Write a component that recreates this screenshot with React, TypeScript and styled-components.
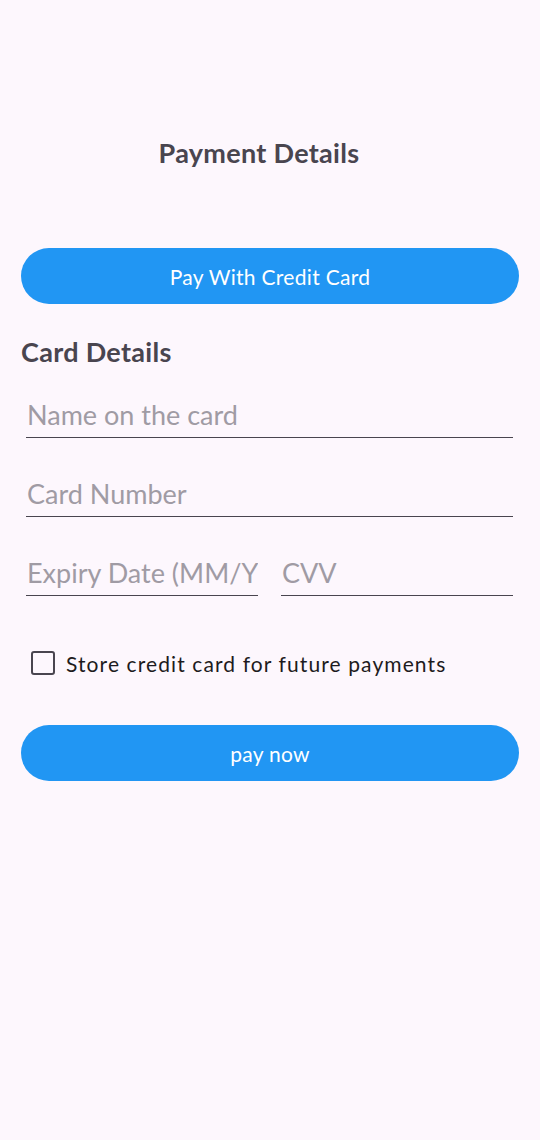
import React from "react";
import styled, { createGlobalStyle } from "styled-components";

const Global = createGlobalStyle`
  html, body { margin: 0; padding: 0; background: #fdf7fd; }
  body { font-family: Lato, "Noto Sans", sans-serif; }
  * { box-sizing: border-box; }
`;

const Page = styled.div`
  min-height: 1140px;
  background: #fdf7fd;
  padding: 136px 21px 0;
  display: flex;
  flex-direction: column;
`;

const Title = styled.h1`
  margin: 0;
  font-size: 27px;
  line-height: 34px;
  font-weight: 700;
  color: #49454f;
  text-align: center;
  padding-right: 22px;
  letter-spacing: 0.3px;
`;

const PillButton = styled.button<{ $mt: number }>`
  margin-top: ${(p) => p.$mt}px;
  height: 56px;
  width: 100%;
  border: none;
  border-radius: 28px;
  background: #2196f3;
  color: #ffffff;
  font-family: Lato, "Noto Sans", sans-serif;
  font-size: 21px;
  letter-spacing: 0.3px;
  cursor: pointer;
`;

const SectionTitle = styled.h2`
  margin: 32px 0 0;
  font-size: 27px;
  line-height: 32px;
  font-weight: 700;
  color: #49454f;
  letter-spacing: 0.3px;
`;

const Fields = styled.div`
  display: flex;
  flex-direction: column;
  gap: 36px;
  margin-top: 27px;
  padding: 0 6px 0 5px;
`;

const Row = styled.div`
  display: grid;
  grid-template-columns: 1fr 1fr;
  gap: 23px;
`;

const Field = styled.input`
  display: block;
  width: 100%;
  height: 43px;
  border: none;
  border-bottom: 1.5px solid #49454f;
  background: transparent;
  padding: 0 0 4px 1px;
  font-family: Lato, "Noto Sans", sans-serif;
  font-size: 27px;
  color: #1d1b20;
  outline: none;
  &::placeholder { color: #a09ba4; }
`;

const CheckRow = styled.label`
  margin-top: 47px;
  height: 40px;
  display: flex;
  align-items: center;
  gap: 11px;
  padding-left: 10px;
  cursor: pointer;
`;

const Box = styled.span`
  width: 24px;
  height: 24px;
  border: 2.5px solid #49454f;
  border-radius: 3px;
  flex: none;
`;

const CheckLabel = styled.span`
  font-size: 21px;
  color: #1d1b20;
  letter-spacing: 1.1px;
`;

export default function App() {
  return (
    <>
      <Global />
      <Page>
        <Title>Payment Details</Title>
        <PillButton $mt={78}>Pay With Credit Card</PillButton>
        <SectionTitle>Card Details</SectionTitle>
        <Fields>
          <Field placeholder="Name on the card" />
          <Field placeholder="Card Number" />
          <Row>
            <Field placeholder="Expiry Date (MM/YY)" />
            <Field placeholder="CVV" />
          </Row>
        </Fields>
        <CheckRow>
          <Box />
          <CheckLabel>Store credit card for future payments</CheckLabel>
        </CheckRow>
        <PillButton $mt={42}>pay now</PillButton>
      </Page>
    </>
  );
}
